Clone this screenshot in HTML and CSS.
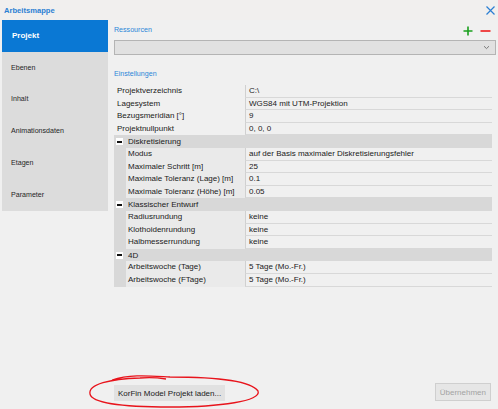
FILE: index.html
```html
<!DOCTYPE html>
<html lang="de">
<head>
<meta charset="utf-8">
<title>Arbeitsmappe</title>
<link rel="stylesheet" href="styles.css">
</head>
<body>
<div class="window">
  <div class="titlebar">
    <span class="title">Arbeitsmappe</span>
    <svg class="close" width="9" height="9" viewBox="0 0 9 9"><path d="M0.5 0.5 L8.5 8.5 M8.5 0.5 L0.5 8.5" stroke="#2b7fd3" stroke-width="1.2" fill="none"/></svg>
  </div>
  <div class="main">
    <nav class="sidebar">
      <div class="nav-item active">Projekt</div>
      <div class="nav-item">Ebenen</div>
      <div class="nav-item">Inhalt</div>
      <div class="nav-item">Animationsdaten</div>
      <div class="nav-item">Etagen</div>
      <div class="nav-item">Parameter</div>
    </nav>
    <section class="content">
      <div class="res-head">
        <span class="label-blue">Ressourcen</span>
        <div class="res-actions">
          <svg width="10" height="10" viewBox="0 0 10 10"><path d="M5 0.5 V9.5 M0.5 5 H9.5" stroke="#1aa01e" stroke-width="1.6" fill="none"/></svg>
          <svg width="11" height="10" viewBox="0 0 11 10"><path d="M0.5 5 H10.5" stroke="#ee1b1b" stroke-width="1.6" fill="none"/></svg>
        </div>
      </div>
      <div class="dropdown">
        <svg class="chev" width="7" height="5" viewBox="0 0 7 5"><path d="M1 1.2 L3.5 3.6 L6 1.2" stroke="#7a7a7a" stroke-width="1" fill="none"/></svg>
      </div>
      <div class="label-blue settings">Einstellungen</div>
      <div class="grid">
        <div class="row top"><div class="k">Projektverzeichnis</div><div class="v">C:\</div></div>
        <div class="row top"><div class="k">Lagesystem</div><div class="v">WGS84 mit UTM-Projektion</div></div>
        <div class="row top"><div class="k">Bezugsmeridian [°]</div><div class="v">9</div></div>
        <div class="row top"><div class="k">Projektnullpunkt</div><div class="v">0, 0, 0</div></div>
        <div class="group"><span class="toggle"></span>Diskretisierung</div>
        <div class="row sub"><div class="gut"></div><div class="k">Modus</div><div class="v">auf der Basis maximaler Diskretisierungsfehler</div></div>
        <div class="row sub"><div class="gut"></div><div class="k">Maximaler Schritt [m]</div><div class="v">25</div></div>
        <div class="row sub"><div class="gut"></div><div class="k">Maximale Toleranz (Lage) [m]</div><div class="v">0.1</div></div>
        <div class="row sub"><div class="gut"></div><div class="k">Maximale Toleranz (Höhe) [m]</div><div class="v">0.05</div></div>
        <div class="group"><span class="toggle"></span>Klassischer Entwurf</div>
        <div class="row sub"><div class="gut"></div><div class="k">Radiusrundung</div><div class="v">keine</div></div>
        <div class="row sub"><div class="gut"></div><div class="k">Klothoidenrundung</div><div class="v">keine</div></div>
        <div class="row sub"><div class="gut"></div><div class="k">Halbmesserrundung</div><div class="v">keine</div></div>
        <div class="group"><span class="toggle"></span>4D</div>
        <div class="row sub"><div class="gut"></div><div class="k">Arbeitswoche (Tage)</div><div class="v">5 Tage (Mo.-Fr.)</div></div>
        <div class="row sub"><div class="gut"></div><div class="k">Arbeitswoche (FTage)</div><div class="v">5 Tage (Mo.-Fr.)</div></div>
      </div>
    </section>
  </div>
  <div class="footer">
    <button class="btn">KorFin Model Projekt laden...</button>
    <button class="btn disabled" disabled>Übernehmen</button>
  </div>
  <svg class="annot" width="498" height="409" viewBox="0 0 498 409"><path d="M112 380 C130 374 150 376 170 377 C210 377 250 380 258 391 C262 401 220 407 170 407 C120 407 92 403 90 394 C88 384 110 379 140 378 C150 377 160 378 166 379" stroke="#e8141c" stroke-width="1.3" fill="none"/></svg>
</div>
</body>
</html>
```
FILE: styles.css
```css
* { box-sizing: border-box; }
html, body { margin: 0; padding: 0; }
body {
  width: 498px;
  height: 409px;
  background: #f0f0f0;
  font-family: "Liberation Sans", Arial, sans-serif;
  font-size: 8px;
  color: #1a1a1a;
  overflow: hidden;
}
.window {
  position: relative;
  width: 498px;
  height: 409px;
  display: flex;
  flex-direction: column;
}
.titlebar {
  height: 20px;
  display: flex;
  align-items: center;
  justify-content: space-between;
  padding: 0 3px 0 4px;
  background: #f1efee;
}
.title {
  color: #2b7fd3;
  font-weight: bold;
  font-size: 7.6px;
}
.main {
  display: flex;
  align-items: flex-start;
}
.sidebar {
  width: 106px;
  margin-left: 2px;
  background: #dcdcdc;
  display: flex;
  flex-direction: column;
}
.nav-item {
  height: 31.8px;
  display: flex;
  align-items: center;
  padding-left: 9px;
  color: #262626;
  font-size: 7.1px;
}
.nav-item.active {
  background: #0a78d4;
  color: #fff;
  font-weight: bold;
  font-size: 8px;
  padding-left: 10px;
}
.content {
  flex: 1;
  padding-left: 6px;
  padding-right: 2px;
}
.label-blue {
  color: #2b86d8;
  font-size: 7.1px;
}
.res-head {
  height: 20px;
  display: flex;
  align-items: center;
  justify-content: space-between;
  padding-right: 5px;
}
.res-actions {
  display: flex;
  gap: 7px;
  align-items: center;
  margin-top: 1px;
}
.dropdown {
  height: 15px;
  background: #e1e1e1;
  border: 1px solid #b4b4b4;
  display: flex;
  align-items: center;
  justify-content: flex-end;
  padding-right: 5px;
}
.settings {
  margin-top: 13px;
  height: 12px;
  line-height: 12px;
}
.grid {
  margin-top: 5px;
  width: 378px;
}
.row {
  height: 12.6px;
  display: grid;
  grid-template-columns: 131px 1fr;
  line-height: 12px;
}
.row.sub {
  grid-template-columns: 12px 119px 1fr;
}
.row .k {
  padding-left: 3px;
  white-space: nowrap;
  overflow: hidden;
}
.row.sub .k {
  padding-left: 2px;
  background: #eaeaea;
}
.row .gut {
  background: #d8d8d8;
}
.row .v {
  padding-left: 3px;
  border-left: 1px solid #d0d0d0;
  border-bottom: 1px solid #d8d8d8;
  white-space: nowrap;
  overflow: hidden;
}
.group {
  height: 12.6px;
  background: #d8d8d8;
  display: flex;
  align-items: center;
  padding-left: 2px;
  gap: 5px;
  color: #1a1a1a;
}
.toggle {
  width: 7px;
  height: 7px;
  background: #fff;
  position: relative;
  display: inline-block;
}
.toggle::after {
  content: "";
  position: absolute;
  left: 1px;
  top: 2.5px;
  width: 5px;
  height: 2px;
  background: #111;
}
.footer {
  margin-top: auto;
  display: flex;
  justify-content: space-between;
  align-items: flex-end;
  padding: 0 7px 8px 114px;
}
.btn {
  font-family: inherit;
  font-size: 8px;
  background: #e1e1e1;
  border: 1px solid #e1e1e1;
  color: #1a1a1a;
  height: 16px;
  padding: 0 3px;
  margin: 0;
}
.btn.disabled {
  height: 18px;
  background: #e6e6e6;
  border: 1px solid #cfcfcf;
  color: #a3a3a3;
  padding: 0 4px;
}
.annot {
  position: absolute;
  left: 0;
  top: 0;
  pointer-events: none;
}
```
